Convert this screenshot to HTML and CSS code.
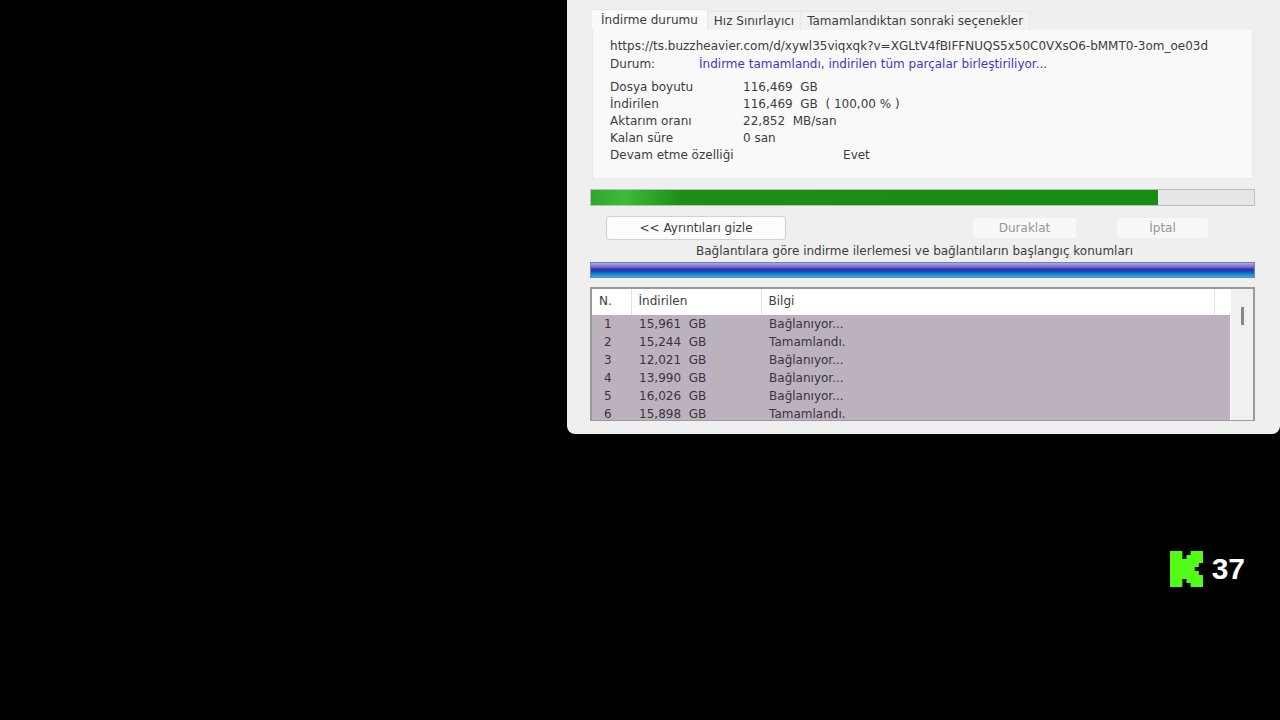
FILE: index.html
```html
<!DOCTYPE html>
<html lang="tr">
<head>
  <meta charset="UTF-8">
  <meta name="viewport" content="width=device-width, initial-scale=1.0">
  <title>İndirme durumu</title>
  <link rel="stylesheet" href="styles.css">
</head>
<body>

<main class="dialog">
  <div class="tabs" role="tablist">
    <button class="tab active" role="tab" aria-selected="true">İndirme durumu</button>
    <button class="tab" role="tab" aria-selected="false">Hız Sınırlayıcı</button>
    <button class="tab" role="tab" aria-selected="false">Tamamlandıktan sonraki seçenekler</button>
  </div>

  <section class="panel" role="tabpanel">
    <p class="url">https://ts.buzzheavier.com/d/xywl35viqxqk?v=XGLtV4fBIFFNUQS5x50C0VXsO6-bMMT0-3om_oe03d</p>
    <div class="status">
      <span>Durum:</span>
      <span class="status-text">İndirme tamamlandı, indirilen tüm parçalar birleştiriliyor...</span>
    </div>
    <dl class="info">
      <dt>Dosya boyutu</dt>
      <dd>116,469&nbsp; GB</dd>
      <dt>İndirilen</dt>
      <dd>116,469&nbsp; GB&nbsp; ( 100,00 % )</dd>
      <dt>Aktarım oranı</dt>
      <dd>22,852&nbsp; MB/san</dd>
      <dt>Kalan süre</dt>
      <dd>0 san</dd>
      <dt>Devam etme özelliği</dt>
      <dd class="resume">Evet</dd>
    </dl>
  </section>

  <div class="progress">
    <div class="progress-fill" style="width: 85.5%"></div>
  </div>

  <div class="actions">
    <button class="btn details">&lt;&lt; Ayrıntıları gizle</button>
    <button class="btn pause" disabled>Duraklat</button>
    <button class="btn cancel" disabled>İptal</button>
  </div>

  <p class="caption">Bağlantılara göre indirme ilerlemesi ve bağlantıların başlangıç konumları</p>
  <div class="segments"></div>

  <div class="list">
    <div class="list-body">
      <table class="connections">
        <thead>
          <tr>
            <th class="col-n">N.</th>
            <th class="col-size">İndirilen</th>
            <th>Bilgi</th>
            <th class="col-end"></th>
          </tr>
        </thead>
        <tbody>
          <tr><td>1</td><td>15,961&nbsp; GB</td><td colspan="2">Bağlanıyor...</td></tr>
          <tr><td>2</td><td>15,244&nbsp; GB</td><td colspan="2">Tamamlandı.</td></tr>
          <tr><td>3</td><td>12,021&nbsp; GB</td><td colspan="2">Bağlanıyor...</td></tr>
          <tr><td>4</td><td>13,990&nbsp; GB</td><td colspan="2">Bağlanıyor...</td></tr>
          <tr><td>5</td><td>16,026&nbsp; GB</td><td colspan="2">Bağlanıyor...</td></tr>
          <tr><td>6</td><td>15,898&nbsp; GB</td><td colspan="2">Tamamlandı.</td></tr>
        </tbody>
      </table>
    </div>
    <div class="scrollbar"><div class="thumb"></div></div>
  </div>
</main>

<aside class="viewers">
  <svg class="logo" viewBox="0 0 8 9" preserveAspectRatio="none" aria-hidden="true">
    <path fill="#53fc18" d="M0 0h3v2h1v-1h1v-1h3v3h-1v1h-1v1h1v1h1v3h-3v-1h-1v-1h-1v2h-3z"/>
  </svg>
  <span>37</span>
</aside>

</body>
</html>
```

FILE: styles.css
```css
* {
  box-sizing: border-box;
}

body {
  margin: 0;
  min-height: 100vh;
  display: flex;
  flex-direction: column;
  align-items: flex-end;
  background-color: #000;
  color: #3c3c3c;
  font-family: "DejaVu Sans", Verdana, sans-serif;
  font-size: 12px;
  line-height: 18px;
}

p, dl, dd {
  margin: 0;
}

button {
  font: inherit;
  color: inherit;
}

.dialog {
  width: 55.7%;
  padding: 9px 25px 13px 23px;
  background-color: #efefef;
  border-radius: 0 0 8px 8px;
}

/* tabs */
.tabs {
  display: flex;
  align-items: flex-end;
  padding-left: 2px;
}

.tab {
  height: 19px;
  padding: 0 6px;
  border: 1px solid #e8e8e8;
  border-width: 1px 1px 0 0;
  background-color: #f2f2f2;
  line-height: 18px;
  white-space: nowrap;
}

.tab.active {
  height: 21px;
  padding: 0 9px;
  background-color: #fafafa;
}

.panel {
  height: 149px;
  margin: 0 2px;
  padding: 7px 0 0 17px;
  background-color: #f9f9f9;
  border: 1px solid #e9e9e9;
  border-top: 0;
  white-space: nowrap;
}

.status {
  display: grid;
  grid-template-columns: 89px 1fr;
}

.status-text {
  color: #4036cc;
}

.info {
  display: grid;
  grid-template-columns: 133px 1fr;
  margin-top: 6px;
  line-height: 17px;
}

.info .resume {
  padding-left: 100px;
}

/* total progress */
.progress {
  height: 17px;
  margin-top: 10px;
  border: 1px solid #bcbcbc;
  background-color: #e6e6e6;
}

.progress-fill {
  height: 100%;
  background: linear-gradient(to right, #2fa62c, #3dbb3a 6%, #1a8f14 16%, #168c10);
}

/* buttons */
.actions {
  display: flex;
  align-items: center;
  margin-top: 10px;
  padding: 0 47px 0 16px;
}

.btn {
  height: 20px;
  padding: 0;
  border: 0;
  border-radius: 3px;
  background-color: #f8f8f8;
}

.btn:disabled {
  color: #969696;
}

.details {
  width: 180px;
  height: 24px;
  margin-right: auto;
  border: 1px solid #d0d0d0;
  border-radius: 4px;
  background-color: #fdfdfd;
}

.pause {
  width: 103px;
  margin-right: 41px;
}

.cancel {
  width: 91px;
}

.caption {
  margin: 2px 0;
  padding-right: 16px;
  text-align: center;
}

.segments {
  height: 16px;
  border: 1px solid #7480a4;
  background: linear-gradient(#b0a8e4, #7068cc 30%, #2434b0 45%, #1c48bc 60%, #1488d0 80%, #24b4e4);
}

/* connection list */
.list {
  display: flex;
  height: 134px;
  margin-top: 9px;
  border: 2px solid #9a9a9a;
  border-bottom-width: 1px;
  background-color: #fff;
}

.list-body {
  flex: 1;
  overflow: hidden;
}

.connections {
  width: 100%;
  table-layout: fixed;
  border-collapse: collapse;
}

.connections th {
  height: 26px;
  padding: 0 7px 2px;
  border-right: 1px solid #e2e2e2;
  font-weight: normal;
  text-align: left;
}

.connections td {
  height: 18px;
  padding: 0 8px;
  background-color: #bcb2be;
  color: #38343a;
}

.connections td:first-child {
  padding: 0 12px;
}

.connections .col-n {
  width: 39px;
}

.connections .col-size {
  width: 130px;
}

.connections .col-end {
  width: 16px;
  border-right: 0;
}

.scrollbar {
  width: 23px;
  padding: 18px 0 0 10px;
  border-left: 1px solid #fff;
  background-color: #f0f0f0;
}

.thumb {
  width: 3px;
  height: 18px;
  background-color: #868686;
}

/* viewer counter */
.viewers {
  display: flex;
  align-items: center;
  gap: 9px;
  margin: 117px 35px 0 0;
  color: #fff;
  font-family: "Liberation Sans", Arial, sans-serif;
  font-size: 30px;
  font-weight: bold;
  line-height: 36px;
}

.logo {
  width: 33px;
  height: 36px;
}
```
